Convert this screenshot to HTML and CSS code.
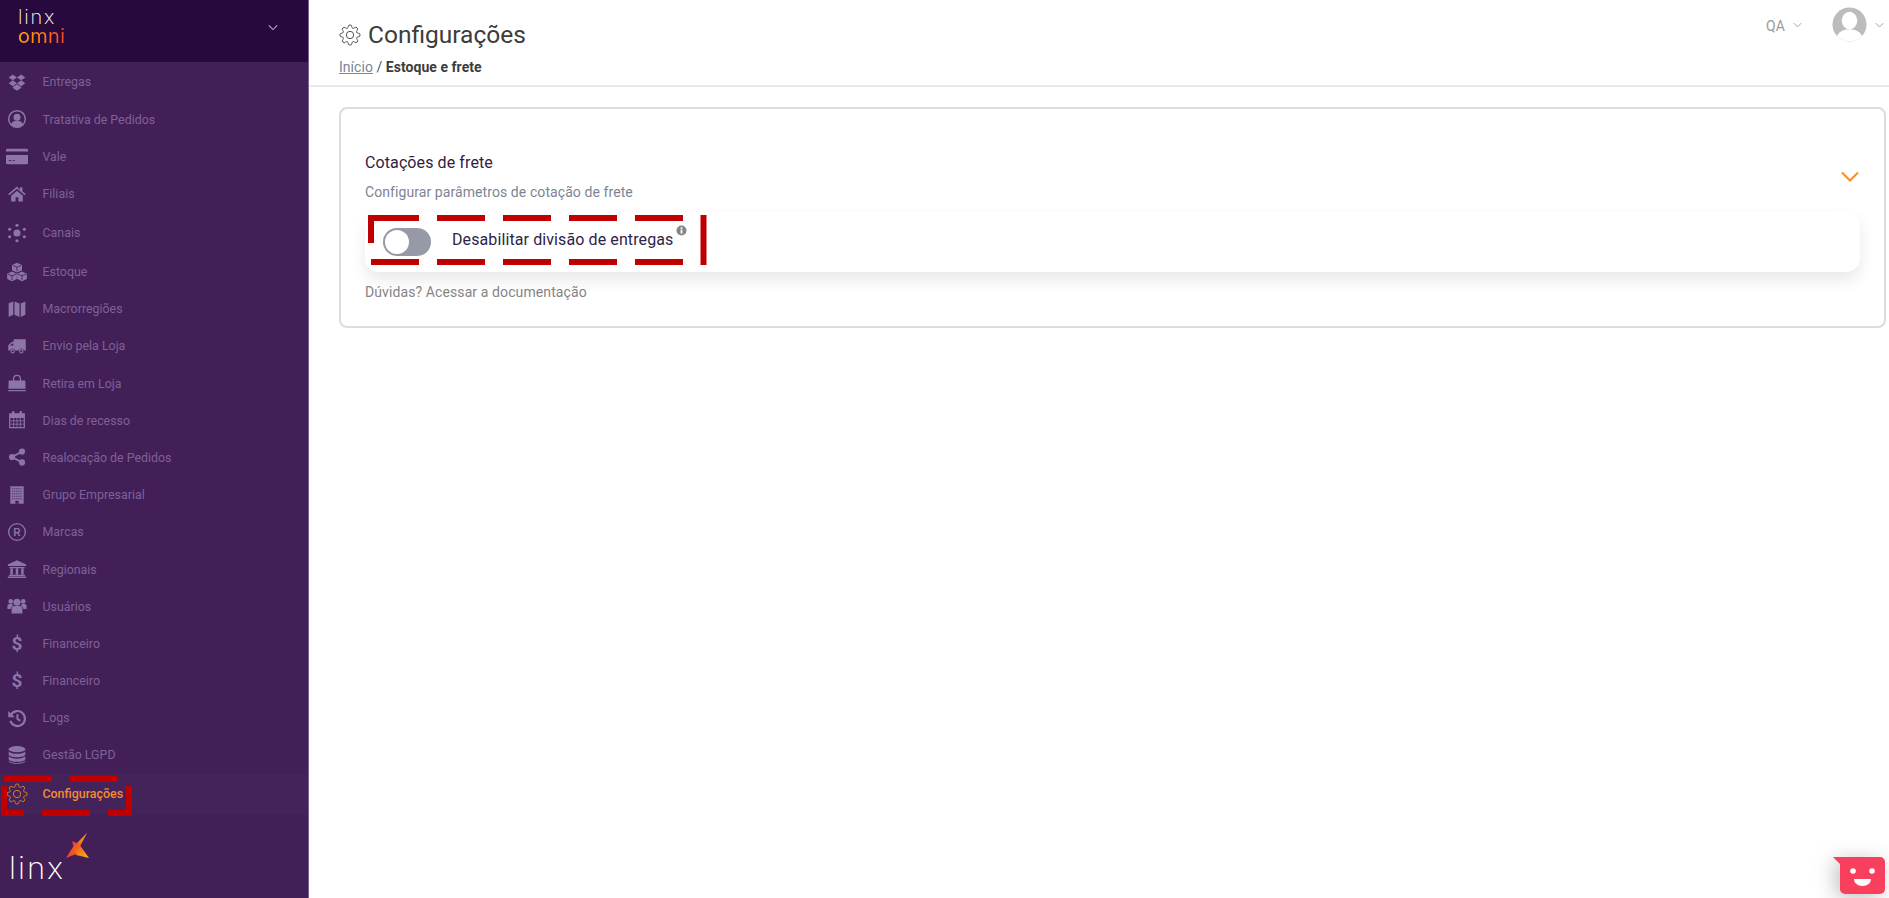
FILE: index.html
```html
<!DOCTYPE html>
<html lang="pt-BR">
<head>
<meta charset="utf-8">
<title>Configurações</title>
<link rel="stylesheet" href="styles.css">
</head>
<body>
<svg class="defs" aria-hidden="true">
  <symbol id="i-gear" viewBox="0 0 24 24"><path fill="none" stroke="currentColor" stroke-width="1" stroke-linejoin="round" d="M19.4 15a1.65 1.65 0 0 0 .33 1.82l.06.06a2 2 0 0 1 0 2.83 2 2 0 0 1-2.83 0l-.06-.06a1.65 1.65 0 0 0-1.82-.33 1.65 1.65 0 0 0-1 1.51V21a2 2 0 0 1-2 2 2 2 0 0 1-2-2v-.09A1.65 1.65 0 0 0 9 19.4a1.65 1.65 0 0 0-1.82.33l-.06.06a2 2 0 0 1-2.83 0 2 2 0 0 1 0-2.83l.06-.06a1.65 1.65 0 0 0 .33-1.82 1.65 1.65 0 0 0-1.51-1H3a2 2 0 0 1-2-2 2 2 0 0 1 2-2h.09A1.65 1.65 0 0 0 4.6 9a1.65 1.65 0 0 0-.33-1.82l-.06-.06a2 2 0 0 1 0-2.83 2 2 0 0 1 2.83 0l.06.06a1.65 1.65 0 0 0 1.82.33H9a1.65 1.65 0 0 0 1-1.51V3a2 2 0 0 1 2-2 2 2 0 0 1 2 2v.09a1.65 1.65 0 0 0 1 1.51 1.65 1.65 0 0 0 1.82-.33l.06-.06a2 2 0 0 1 2.83 0 2 2 0 0 1 0 2.83l-.06.06a1.65 1.65 0 0 0-.33 1.82V9a1.65 1.65 0 0 0 1.51 1H21a2 2 0 0 1 2 2 2 2 0 0 1-2 2h-.09a1.65 1.65 0 0 0-1.51 1z"/><circle cx="12" cy="12" r="4" fill="none" stroke="currentColor" stroke-width="1"/></symbol>
  <symbol id="i-chev" viewBox="0 0 12 8"><path fill="none" stroke="currentColor" stroke-width="1.3" d="M1 1.5l5 5 5-5"/></symbol>
</svg>

<div class="app">
  <aside class="sidebar">
    <div class="side-head">
      <div class="brand">
        <span class="brand-linx">linx</span>
        <span class="brand-omni">omni</span>
      </div>
      <svg class="side-chev"><use href="#i-chev"/></svg>
    </div>
    <nav class="nav">
      <a class="nav-item"><svg class="ico" viewBox="0 0 24 24"><path fill="currentColor" d="M7 3l5 3.6-5 3.4-5-3.4zM17 3l5 3.6-5 3.4-5-3.4zM2 13.4L7 10l5 3.4L7 17zM22 13.4L17 10l-5 3.4 5 3.6zM7 18l5-3.2 5 3.2 0 1.2-5 3.3-5-3.3z"/></svg><span>Entregas</span></a>
      <a class="nav-item"><svg class="ico" viewBox="0 0 24 24"><circle cx="12" cy="12" r="10" fill="none" stroke="currentColor" stroke-width="1.8"/><circle cx="12" cy="10" r="4.2" fill="currentColor"/><path fill="currentColor" d="M4.8 18.3c1-3 3.6-4.3 7.2-4.3s6.200 1.300 7.200 4.300C17.400 20.500 15 22 12 22s-5.400-1.500-7.200-3.700z"/></svg><span>Tratativa de Pedidos</span></a>
      <a class="nav-item"><svg class="ico ico-wide" viewBox="0 0 24 18"><path fill="currentColor" d="M1.500 1h21A1.500 1.500 0 0 1 24 2.500V4H0V2.500A1.500 1.500 0 0 1 1.500 1zM0 8h24v8.500a1.500 1.500 0 0 1-1.500 1.500h-21A1.500 1.500 0 0 1 0 16.500z"/><path stroke="#421f57" stroke-width="1" d="M3 14h3M7.500 14h2"/></svg><span>Vale</span></a>
      <a class="nav-item"><svg class="ico" viewBox="0 0 24 24"><path fill="currentColor" d="M12 3L1.500 12l1.300 1.500L12 5.700l9.200 7.800 1.300-1.500-4-3.400V4h-3v2.800zM5 14.200V21h5.300v-5h3.400v5H19v-6.800l-7-6z"/></svg><span>Filiais</span></a>
      <a class="nav-item nav-item-tall"><svg class="ico" viewBox="0 0 24 24"><g fill="currentColor"><circle cx="12" cy="12" r="4.300"/><circle cx="12" cy="2.700" r="1.900"/><circle cx="12" cy="21.300" r="1.900"/><circle cx="3.200" cy="7.500" r="1.900"/><circle cx="20.800" cy="7.500" r="1.900"/><circle cx="3.200" cy="16.500" r="1.900"/><circle cx="20.800" cy="16.500" r="1.900"/></g></svg><span>Canais</span></a>
      <a class="nav-item"><svg class="ico ico-wide" viewBox="0 0 24 24"><path fill="currentColor" d="M12 1l6 2.600v6.200L12 12.500 6 9.800V3.600zM6 11.500l5.800 2.600v6.400L6 23.200.2 20.500v-6.400zM18 11.500l5.800 2.600v6.400L18 23.200l-5.800-2.700v-6.400z"/><path fill="none" stroke="#421f57" stroke-width="1" d="M7 4L12 6.200l5-2.200M12 6.200v5M1.200 14.500L6 16.700l4.800-2.200M6 16.700v5M13.200 14.500L18 16.700l4.800-2.200M18 16.700v5"/></svg><span>Estoque</span></a>
      <a class="nav-item"><svg class="ico" viewBox="0 0 24 24"><path fill="currentColor" d="M2 5l5.500-2v16L2 21.500zM9 3l6 2.500v16L9 19zM16.500 5.500L22 3v16l-5.500 2.500z"/></svg><span>Macrorregiões</span></a>
      <a class="nav-item"><svg class="ico" viewBox="0 0 24 24"><path fill="currentColor" d="M8 4h14.500v13.500h-2.300a3 3 0 0 0-5.900 0H9.700a3 3 0 0 0-5.900 0H1.500v-6.300L6 7h2z"/><circle cx="6.800" cy="18.300" r="2" fill="none" stroke="currentColor" stroke-width="1.300"/><circle cx="17.200" cy="18.300" r="2" fill="none" stroke="currentColor" stroke-width="1.300"/><path fill="#421f57" d="M3.500 11.500L6.500 9h1v2.500z"/></svg><span>Envio pela Loja</span></a>
      <a class="nav-item"><svg class="ico" viewBox="0 0 24 24"><path fill="currentColor" d="M2 9h5.200V7a4.800 4.800 0 0 1 9.600 0v2H22l.3 10H1.700zM8.700 9h6.600V7a3.300 3.300 0 0 0-6.600 0zM1.500 20.300h21V22h-21z"/></svg><span>Retira em Loja</span></a>
      <a class="nav-item"><svg class="ico" viewBox="0 0 24 24"><path fill="currentColor" d="M2.500 4H6V2.600a1.500 1.500 0 0 1 3 0V4h6V2.600a1.500 1.500 0 0 1 3 0V4h3.500v18h-19zM4 9.500V20.500h16V9.500z"/><path stroke="currentColor" stroke-width="1" d="M4 13h16M4 17h16M8 9.500v11M12 9.500v11M16 9.500v11"/></svg><span>Dias de recesso</span></a>
      <a class="nav-item"><svg class="ico" viewBox="0 0 24 24"><circle cx="18" cy="5.500" r="3.700" fill="currentColor"/><circle cx="18" cy="18.500" r="3.700" fill="currentColor"/><circle cx="6" cy="12" r="3.700" fill="currentColor"/><path fill="none" stroke="currentColor" stroke-width="2.200" d="M18 5.500L6 12l12 6.500"/></svg><span>Realocação de Pedidos</span></a>
      <a class="nav-item"><svg class="ico" viewBox="0 0 24 24"><path fill="currentColor" d="M4 1.500h16v21H4z"/><path stroke="#421f57" stroke-width="1" stroke-dasharray="1.500 1" d="M6 4.500h12M6 7.500h12M6 10.500h12M6 13.500h12M6 16.500h12"/><path fill="#421f57" d="M10 19h4v3.500h-4z"/></svg><span>Grupo Empresarial</span></a>
      <a class="nav-item"><svg class="ico" viewBox="0 0 24 24"><circle cx="12" cy="12" r="10" fill="none" stroke="currentColor" stroke-width="1.600"/><text class="ico-r" x="12" y="17.200" text-anchor="middle">R</text></svg><span>Marcas</span></a>
      <a class="nav-item"><svg class="ico ico-wide" viewBox="0 0 24 24"><path fill="currentColor" d="M12 1.500l11 5v2H1v-2zM3 9.500h18V11H3zM4 11.500h3v7H4zM10.500 11.500h3v7h-3zM17 11.500h3v7h-3zM2.500 19h19v1.500h-19zM1 21h22v1.800H1z"/></svg><span>Regionais</span></a>
      <a class="nav-item"><svg class="ico" viewBox="0 0 24 24"><g fill="currentColor"><circle cx="12" cy="7.500" r="4.300"/><circle cx="4.500" cy="6.500" r="2.800"/><circle cx="19.500" cy="6.500" r="2.800"/><path d="M5.500 21v-5.500A3.500 3.500 0 0 1 9 12h6a3.500 3.500 0 0 1 3.500 3.500V21zM0.500 15.500V12a2.500 2.500 0 0 1 2.500-2.500h3.200a6 6 0 0 0 1.200 2.200A5 5 0 0 0 4.300 15.500zM23.500 15.500V12A2.500 2.500 0 0 0 21 9.500h-3.200a6 6 0 0 1-1.200 2.200 5 5 0 0 1 3.100 3.800z"/></g></svg><span>Usuários</span></a>
      <a class="nav-item"><span class="ico-glyph">$</span><span>Financeiro</span></a>
      <a class="nav-item"><span class="ico-glyph">$</span><span>Financeiro</span></a>
      <a class="nav-item"><svg class="ico" viewBox="0 0 24 24"><path fill="none" stroke="currentColor" stroke-width="2.600" d="M4.800 8A9 9 0 1 1 4 15.500"/><path fill="currentColor" d="M1.500 3.500l8 7.500h-8z"/><path fill="none" stroke="currentColor" stroke-width="2.400" d="M12.500 7.500v5.500l3.500 2.500"/></svg><span>Logs</span></a>
      <a class="nav-item"><svg class="ico" viewBox="0 0 24 24"><g fill="currentColor"><ellipse cx="12" cy="5" rx="10" ry="3.700"/><path d="M2 7.700c1.500 2 5.500 2.800 10 2.800s8.500-.8 10-2.800V11c0 2-4.500 3.600-10 3.600S2 13 2 11zM2 13.500c1.500 2 5.500 2.900 10 2.900s8.500-.9 10-2.900V16.700c0 2-4.500 3.500-10 3.500S2 18.700 2 16.700z"/><path d="M2 18.800c1.500 1.800 5.500 2.700 10 2.700s8.500-.9 10-2.700v.7c0 1.800-4.500 3-10 3s-10-1.200-10-3z"/></g></svg><span>Gestão LGPD</span></a>
      <a class="nav-item nav-item-tall is-active"><svg class="ico"><use href="#i-gear"/></svg><span>Configurações</span></a>
    </nav>
    <div class="side-foot">
      <span class="foot-linx">linx</span>
      <svg class="foot-mark" viewBox="0 0 26 26">
        <defs><linearGradient id="lx" x1="0" y1="1" x2="1" y2="0"><stop offset="0" stop-color="#f0402c"/><stop offset=".55" stop-color="#f5651f"/><stop offset="1" stop-color="#fbb034"/></linearGradient>
        <linearGradient id="lx2" x1="0" y1="0" x2="1" y2="1"><stop offset="0" stop-color="#e8352a"/><stop offset="1" stop-color="#fdb913"/></linearGradient></defs>
        <path fill="url(#lx)" d="M23 1L12 22 2 26l7-11z"/>
        <path fill="url(#lx2)" d="M8 9l7 3L25 26l-13-3z"/>
      </svg>
    </div>
    <svg class="mark mark-side" viewBox="0 0 134 42"><path class="dash" d="M4 3h48M70 3h48M4 10v30M1 37h23M42 37h48M108 37h21M129 10v30"/></svg>
  </aside>

  <main class="main">
    <header class="topbar">
      <div class="top-left">
        <h1 class="page-title"><svg class="title-gear"><use href="#i-gear"/></svg>Configurações</h1>
        <p class="crumbs"><a class="crumb-link">Início</a> / <b>Estoque e frete</b></p>
      </div>
      <div class="top-right">
        <span class="env">QA</span>
        <svg class="chev-sm"><use href="#i-chev"/></svg>
        <svg class="avatar" viewBox="0 0 36 36"><defs><clipPath id="av"><circle cx="18" cy="18" r="17.500"/></clipPath></defs><circle cx="18" cy="18" r="17.500" fill="#bcbcbc"/><g clip-path="url(#av)" fill="#fff"><ellipse cx="18" cy="14" rx="8" ry="9"/><path d="M4 36c0-9 6-13 14-13s14 4 14 13z"/></g></svg>
        <svg class="chev-sm chev-user"><use href="#i-chev"/></svg>
      </div>
    </header>
    <section class="content">
      <article class="card">
        <div class="card-head">
          <div>
            <h2 class="card-title">Cotações de frete</h2>
            <p class="card-sub">Configurar parâmetros de cotação de frete</p>
          </div>
          <svg class="card-chev" viewBox="0 0 18 12"><path fill="none" stroke="currentColor" stroke-width="2" d="M1 1.500l8 8 8-8"/></svg>
        </div>
        <div class="option">
          <span class="toggle"><span class="knob"></span></span>
          <span class="option-label">Desabilitar divisão de entregas</span>
          <svg class="info" viewBox="0 0 12 12"><circle cx="6" cy="6" r="5.500" fill="#858585"/><rect x="5" y="5" width="2" height="4.300" fill="#fff"/><rect x="5" y="2.500" width="2" height="1.700" fill="#fff"/></svg>
          <svg class="mark mark-option" viewBox="0 0 340 52"><path class="dash" d="M0 3h51M69 3h48M135 3h48M201 3h48M267 3h48M3 0v28M3 47h48M69 47h48M135 47h48M201 47h48M267 47h48M335.500 0v50"/></svg>
        </div>
        <p class="doc">Dúvidas? Acessar a documentação</p>
      </article>
    </section>
  </main>
</div>

<button class="chat" aria-label="Chat">
  <svg viewBox="0 0 52 37"><path fill="#f83f5e" d="M0 0h47a5 5 0 0 1 5 5v27a5 5 0 0 1-5 5H12a5 5 0 0 1-5-5V7z"/><circle cx="20" cy="14" r="2.800" fill="#fff"/><circle cx="39" cy="14" r="2.800" fill="#fff"/><path fill="#fff" d="M21 22h17c0 4-3.500 7-8.500 7S21 26 21 22z"/></svg>
</button>
</body>
</html>
```
FILE: styles.css
```css
* { box-sizing: border-box; }
html, body { margin: 0; height: 100%; overflow: hidden; background: #fff; }
body { font-family: Roboto, "Liberation Sans", sans-serif; color: #3a3a3a; }
.defs { position: absolute; width: 0; height: 0; }

.app { display: flex; height: 898px; }

.sidebar { position: relative; width: 309px; flex: none; display: flex; flex-direction: column; background: #421f57; border-right: 1px solid #7c5f98; }
.side-head { height: 62px; background: #28093e; display: flex; justify-content: space-between; padding: 7px 30px 0 18px; }
.brand { display: flex; flex-direction: column; align-items: flex-start; font-family: Inter, Lato, sans-serif; font-weight: 200; font-size: 20px; line-height: 20px; letter-spacing: 1.8px; }
.brand-linx { color: #fff; }
.brand-omni { font-weight: 400; letter-spacing: .3px; margin-top: -1px; background: linear-gradient(90deg, #ffa600, #ff7a18 55%, #ef4023); -webkit-background-clip: text; background-clip: text; color: transparent; }
.side-chev { width: 10px; height: 7px; margin-top: 17px; color: #b9aac4; }

.nav { display: flex; flex-direction: column; padding-top: 1.4px; }
.nav-item { display: flex; align-items: center; height: 37.2px; padding-left: 7px; font-size: 12.4px; color: #7e6198; white-space: nowrap; }
.nav-item-tall { height: 40.8px; }
.ico { width: 20px; height: 20px; margin-right: 15.5px; flex: none; color: #8d76a5; }
.ico-wide { width: 22px; margin-left: -1px; margin-right: 14.5px; }
.ico-r { font: 500 14px Roboto, sans-serif; fill: currentColor; }
.ico-glyph { width: 20px; margin-right: 15.5px; text-align: center; font-size: 19px; font-weight: 700; color: #8d76a5; flex: none; }
.nav-item.is-active { color: #f58a2c; font-weight: 500; background: #44225a; }
.is-active .ico { width: 22px; height: 22px; margin-left: -1px; margin-right: 14.5px; color: #e08430; }

.side-foot { position: relative; height: 50px; margin-top: 20px; padding-left: 9px; }
.foot-linx { font-family: Inter, Lato, sans-serif; font-weight: 200; font-size: 31px; line-height: 40px; letter-spacing: 2px; color: #fff; display: block; margin-top: 14px; }
.foot-mark { position: absolute; left: 64px; top: -2px; width: 26px; height: 26px; }

.mark { position: absolute; overflow: visible; pointer-events: none; }
.dash { fill: none; stroke: #c00000; stroke-width: 6; }
.mark-side { left: 0; top: 776px; width: 134px; height: 42px; }
.mark-option { left: 3px; top: 3px; width: 340px; height: 52px; }

.main { flex: 1; min-width: 0; display: flex; flex-direction: column; }
.topbar { height: 87px; border-bottom: 2px solid #e9e9ec; display: flex; justify-content: space-between; padding: 21px 0 0 30px; }
.page-title { margin: 0; display: flex; align-items: center; height: 28px; font-size: 24.5px; font-weight: 400; color: #3c3c3c; line-height: 28px; }
.title-gear { width: 22px; height: 22px; margin-right: 7px; color: #444; }
.crumbs { margin: 9px 0 0; font-size: 14px; line-height: 18px; color: #555; letter-spacing: .04px; }
.crumb-link { color: #7c8494; text-decoration: underline; }
.crumbs b { font-weight: 700; color: #3c3c3c; }
.top-right { display: flex; align-items: flex-start; padding-right: 5px; }
.env { font-size: 14px; line-height: 18px; color: #9a9a9a; margin-top: -4px; letter-spacing: .1px; }
.chev-sm { width: 9px; height: 6px; color: #a2a2a2; margin: 1px 0 0 8px; }
.avatar { width: 35px; height: 35px; margin: -14px 0 0 30px; }
.chev-user { margin-left: 8px; }

.content { padding: 20px 3px 0 30px; }
.card { border: 2px solid #dcdce0; border-radius: 8px; padding: 43px 24px 24px; background: #fff; }
.card-head { display: flex; justify-content: space-between; align-items: center; }
.card-title { margin: 0; font-size: 16px; line-height: 22px; font-weight: 400; color: #33203f; letter-spacing: .1px; }
.card-sub { margin: 8px 0 0; font-size: 14px; line-height: 20px; color: #7c8494; letter-spacing: .08px; }
.card-chev { width: 18px; height: 12px; color: #ff8c1a; margin-right: 1px; }
.option { position: relative; height: 60px; margin-top: 10px; background: #fff; border-radius: 14px; box-shadow: 0 8px 16px rgba(0,0,0,.09); display: flex; align-items: center; padding-left: 18px; }
.toggle { width: 48px; height: 28px; border-radius: 14px; background: #969aa6; display: block; padding: 2px; flex: none; }
.knob { display: block; width: 24px; height: 24px; border-radius: 50%; background: #fff; }
.option-label { margin: 0 0 5px 21px; font-size: 16px; line-height: 22px; color: #2f2347; letter-spacing: .1px; }
.info { width: 11px; height: 11px; margin: -24px 0 0 3px; }
.doc { margin: 10px 0 0; font-size: 14px; line-height: 20px; color: #858585; letter-spacing: .1px; }

.chat { position: fixed; right: 4px; bottom: 4px; width: 52px; height: 37px; padding: 0; border: 0; background: none; filter: drop-shadow(-4px 4px 10px rgba(0,0,0,.25)); }
.chat svg { display: block; width: 100%; height: 100%; }
```
